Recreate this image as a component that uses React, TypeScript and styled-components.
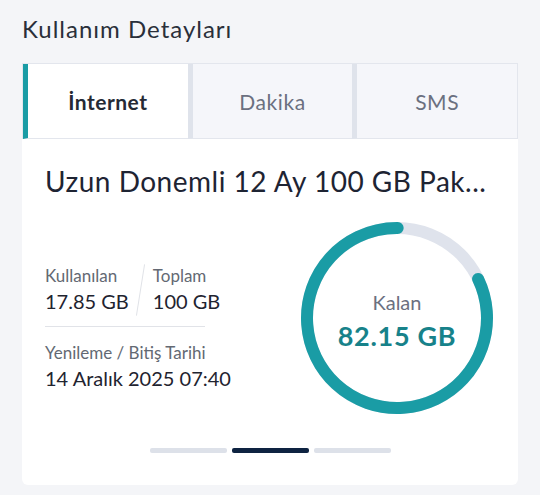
import React from "react";
import styled, { createGlobalStyle } from "styled-components";

const GlobalStyle = createGlobalStyle`
  * { box-sizing: border-box; }
  body {
    margin: 0;
    background: #f4f5f8;
    font-family: "Lato", "Noto Sans", sans-serif;
    color: #222834;
  }
`;

const tabs = ["İnternet", "Dakika", "SMS"];
const used = 17.85;
const total = 100;

function App() {
  return (
    <>
      <GlobalStyle />
      <Page>
        <Heading>Kullanım Detayları</Heading>
        <Tabs>
          {tabs.map((t, i) => (
            <Tab key={t} active={i === 0}>
              {t}
            </Tab>
          ))}
        </Tabs>
        <Card>
          <CardTitle>Uzun Donemli 12 Ay 100 GB Pak...</CardTitle>
          <Content>
            <Info>
              <Stats>
                <Stat>
                  <Label>Kullanılan</Label>
                  <Value>17.85 GB</Value>
                </Stat>
                <Slash />
                <Stat>
                  <Label>Toplam</Label>
                  <Value>100 GB</Value>
                </Stat>
              </Stats>
              <Divider />
              <Label>Yenileme / Bitiş Tarihi</Label>
              <Value>14 Aralık 2025 07:40</Value>
            </Info>
            <Donut used={used} total={total} />
          </Content>
          <Dots>
            <Dot />
            <Dot active />
            <Dot />
          </Dots>
        </Card>
      </Page>
    </>
  );
}

function Donut({ used, total }: { used: number; total: number }) {
  const r = 90;
  const c = 2 * Math.PI * r;
  const left = (total - used) / total;
  return (
    <DonutWrap>
      <svg width="198" height="198" viewBox="0 0 198 198">
        <circle cx="99" cy="99" r={r} fill="none" stroke="#dfe3ec" strokeWidth="12" />
        <circle
          cx="99"
          cy="99"
          r={r}
          fill="none"
          stroke="#1a9ca5"
          strokeWidth="12"
          strokeLinecap="round"
          strokeDasharray={`${c * left} ${c}`}
          transform={`rotate(${-90 + (used / total) * 360} 99 99)`}
        />
      </svg>
      <DonutText>
        <DonutLabel>Kalan</DonutLabel>
        <DonutValue>{(total - used).toFixed(2)} GB</DonutValue>
      </DonutText>
    </DonutWrap>
  );
}

export default App;

const Page = styled.div`
  padding: 14px 22px 0;
`;

const Heading = styled.h1`
  margin: 0 0 20px;
  font-size: 24px;
  font-weight: 400;
  line-height: 29px;
  letter-spacing: 1px;
  color: #2a2f3a;
`;

const Tabs = styled.div`
  display: flex;
  height: 76px;
  border: 1px solid #e3e6ed;
  border-bottom: none;
`;

const Tab = styled.div<{ active?: boolean }>`
  flex: 1;
  display: flex;
  align-items: center;
  justify-content: center;
  border-left: 5px solid ${(p) => (p.active ? "#1a9ca5" : "#dfe3eb")};
  background: ${(p) => (p.active ? "#ffffff" : "#f5f6fa")};
  border-bottom: 1px solid #e3e6ed;
  font-size: 21px;
  letter-spacing: ${(p) => (p.active ? "0.5px" : "0.6px")};
  font-weight: ${(p) => (p.active ? 700 : 400)};
  color: ${(p) => (p.active ? "#252a35" : "#6b7080")};
`;

const Card = styled.div`
  background: #ffffff;
  border-radius: 0 0 6px 6px;
  padding: 25px 22px 32px 23px;
`;

const CardTitle = styled.h2`
  margin: 0;
  font-size: 28px;
  font-weight: 400;
  line-height: 34px;
  letter-spacing: 0.5px;
  white-space: nowrap;
  color: #1e2433;
`;

const Content = styled.div`
  display: flex;
  align-items: center;
  justify-content: space-between;
  margin-top: 21px;
`;

const Info = styled.div`
  display: flex;
  flex-direction: column;
  margin-top: 20px;
`;

const Stats = styled.div`
  display: flex;
  align-items: center;
`;

const Stat = styled.div`
  display: flex;
  flex-direction: column;
`;

const Slash = styled.span`
  width: 1px;
  height: 52px;
  margin: 0 12px 0 11px;
  background: #e1e3e8;
  transform: rotate(9deg);
`;

const Label = styled.div`
  font-size: 17px;
  line-height: 23px;
  color: #636973;
`;

const Value = styled.div`
  font-size: 20px;
  line-height: 29px;
  color: #1f2430;
`;

const Divider = styled.div`
  width: 160px;
  height: 1px;
  background: #e1e3e8;
  margin: 10px 0 14px;
`;

const DonutWrap = styled.div`
  position: relative;
  width: 198px;
  height: 198px;
`;

const DonutText = styled.div`
  position: absolute;
  inset: 0;
  display: flex;
  flex-direction: column;
  align-items: center;
  justify-content: center;
  padding-top: 8px;
`;

const DonutLabel = styled.div`
  font-size: 20px;
  line-height: 24px;
  color: #6b7080;
`;

const DonutValue = styled.div`
  margin-top: 4px;
  font-size: 27px;
  line-height: 36px;
  font-weight: 700;
  letter-spacing: 0.7px;
  color: #17828a;
`;

const Dots = styled.div`
  display: flex;
  justify-content: center;
  gap: 5px;
  margin-top: 31px;
`;

const Dot = styled.span<{ active?: boolean }>`
  width: 77px;
  height: 5px;
  border-radius: 2px;
  background: ${(p) => (p.active ? "#0e2341" : "#dde1e9")};
`;
